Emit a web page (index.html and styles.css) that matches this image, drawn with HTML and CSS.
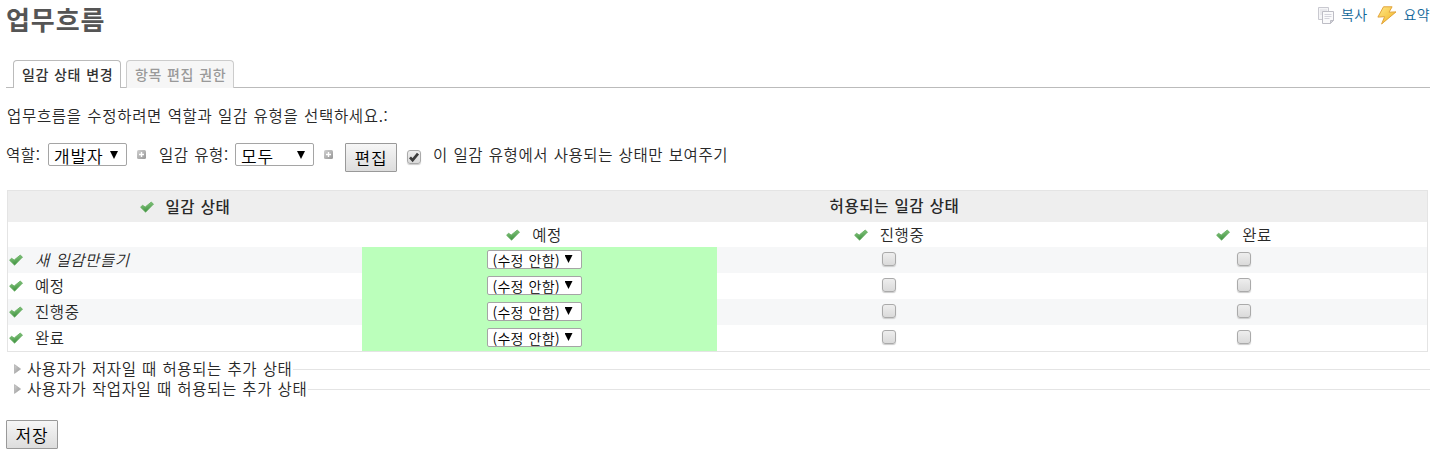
FILE: index.html
```html
<!DOCTYPE html>
<html lang="ko">
<head>
<meta charset="utf-8">
<title>업무흐름</title>
<link rel="stylesheet" href="styles.css">
</head>
<body>
<svg width="0" height="0" class="defs" aria-hidden="true">
  <defs>
    <linearGradient id="green" x1="0" y1="0" x2="0.3" y2="1"><stop offset="0" stop-color="#93d08a"/><stop offset="1" stop-color="#3f9240"/></linearGradient>
    <linearGradient id="gold" x1="0" y1="0" x2="1" y2="1"><stop offset="0" stop-color="#ffe88a"/><stop offset="1" stop-color="#f0b21c"/></linearGradient>
    <linearGradient id="silver" x1="0" y1="0" x2="1" y2="1"><stop offset="0" stop-color="#d0d0d0"/><stop offset="1" stop-color="#969696"/></linearGradient>
    <symbol id="check" viewBox="0 0 14 12"><path d="M.6 6.3 2.5 4.2 5.2 6 11.2 1.1 13.5 3.1 5.6 11.2Z" fill="url(#green)" stroke="#64ad5f" stroke-width=".8" stroke-linejoin="round"/></symbol>
    <symbol id="plus" viewBox="0 0 9 9"><rect width="9" height="9" rx="1.5" fill="url(#silver)"/><path d="M4.5 2v5M2 4.5h5" stroke="#fff" stroke-width="1.4"/></symbol>
    <symbol id="arrow" viewBox="0 0 7 10"><path d="M.5.6 6.6 5 .5 9.4Z" fill="url(#silver)" stroke="#aaa" stroke-width=".7"/></symbol>
  </defs>
</svg>
<header class="top">
  <h2>업무흐름</h2>
  <nav class="contextual">
    <a><svg class="copy" width="18" height="19" viewBox="0 0 18 19"><path d="M1.5 1.5h10v12h-10z" fill="#f5f5f7" stroke="#c9c9d0"/><path d="M3 4h7M3 6h7M3 8h7" stroke="#dcdce2"/><path d="M5.5 5.5h11v9l-3 3h-8z" fill="#fafafb" stroke="#bdbdc5"/><path d="M7.5 8.5h7M7.5 10.5h7M7.5 12.5h5" stroke="#d4d4dc"/><path d="M13.5 17.5v-3h3z" fill="#d4d4dc" stroke="#bdbdc5"/></svg><span>복사</span></a>
    <a><svg class="bolt" width="20" height="19" viewBox="0 0 20 19"><path d="M6.5.8h8.6L12 6.2l7-.3L4.6 18l3-7.3-6.7.4Z" fill="url(#gold)" stroke="#e2a43c" stroke-width="1" stroke-linejoin="round"/></svg><span>요약</span></a>
  </nav>
</header>
<div class="tabs"><a class="tab selected">일감 상태 변경</a><a class="tab">항목 편집 권한</a></div>
<p class="intro">업무흐름을 수정하려면 역할과 일감 유형을 선택하세요.:</p>
<form class="filters">
  <label class="role">역할:</label>
  <span class="select"><span>개발자</span><i></i></span>
  <svg class="plus" width="9" height="9"><use href="#plus"/></svg>
  <label class="tracker">일감 유형:</label>
  <span class="select"><span>모두</span><i></i></span>
  <svg class="plus" width="9" height="9"><use href="#plus"/></svg>
  <button type="button" class="button edit">편집</button>
  <span class="box checked"><svg width="14" height="14" viewBox="0 0 14 14"><path d="m3 7.4 2.6 2.8L11 3.6" fill="none" stroke="#3d3d3d" stroke-width="2.7"/></svg></span>
  <label>이 일감 유형에서 사용되는 상태만 보여주기</label>
</form>
<div class="table">
  <div class="row head"><div class="cell title"><svg class="ck"><use href="#check"/></svg><b>일감 상태</b></div><div class="allowed">허용되는 일감 상태</div></div>
  <div class="row names"><div class="cell"></div><div class="cell"><svg class="ck"><use href="#check"/></svg><span>예정</span></div><div class="cell"><svg class="ck"><use href="#check"/></svg><span>진행중</span></div><div class="cell"><svg class="ck"><use href="#check"/></svg><span>완료</span></div></div>
  <div class="row odd"><div class="cell name"><svg class="ck"><use href="#check"/></svg><em>새 일감만들기</em></div><div class="cell green"><span class="select small"><span>(수정 안함)</span><i></i></span></div><div class="cell"><span class="box"></span></div><div class="cell"><span class="box"></span></div></div>
  <div class="row"><div class="cell name"><svg class="ck"><use href="#check"/></svg><span>예정</span></div><div class="cell green"><span class="select small"><span>(수정 안함)</span><i></i></span></div><div class="cell"><span class="box"></span></div><div class="cell"><span class="box"></span></div></div>
  <div class="row odd"><div class="cell name"><svg class="ck"><use href="#check"/></svg><span>진행중</span></div><div class="cell green"><span class="select small"><span>(수정 안함)</span><i></i></span></div><div class="cell"><span class="box"></span></div><div class="cell"><span class="box"></span></div></div>
  <div class="row"><div class="cell name"><svg class="ck"><use href="#check"/></svg><span>완료</span></div><div class="cell green"><span class="select small"><span>(수정 안함)</span><i></i></span></div><div class="cell"><span class="box"></span></div><div class="cell"><span class="box"></span></div></div>
</div>
<div class="legends">
  <div class="legend"><svg width="7" height="10"><use href="#arrow"/></svg><span>사용자가 저자일 때 허용되는 추가 상태</span></div>
  <div class="legend"><svg width="7" height="10"><use href="#arrow"/></svg><span>사용자가 작업자일 때 허용되는 추가 상태</span></div>
</div>
<button type="button" class="button">저장</button>
</body>
</html>
```
FILE: styles.css
```css
* { box-sizing: border-box; }
body {
  margin: 0;
  padding: 0 15px 0 6px;
  height: 460px;
  overflow: hidden;
  background: #fff;
  color: #282828;
  font: 350 15.5px/20px "Noto Sans CJK KR", sans-serif;
  letter-spacing: .6px;
  word-spacing: .6px;
  white-space: nowrap;
}
svg { display: block; flex: none; }
.defs { position: absolute; }
.top { display: flex; justify-content: space-between; height: 60px; }
h2 { margin: 1px 0 0; font-size: 26px; line-height: 36px; letter-spacing: .9px; color: #555; }
.contextual { display: flex; gap: 10px; padding-top: 4px; font-size: 14px; letter-spacing: .4px; color: #116699; }
.contextual a { display: flex; height: 20px; }
.contextual .copy { margin: 2px 6px 0 0; }
.contextual .bolt { margin: 2px 6px 0 0; }
.tabs { display: flex; gap: 5px; height: 28px; padding-left: 7px; border-bottom: 1px solid #bbb; }
.tab {
  width: 108px;
  height: 28px;
  padding-left: 8px;
  border: 1px solid #ccc;
  border-bottom: 0;
  border-radius: 4px 4px 0 0;
  background: #f6f6f6;
  color: #999;
  font-size: 14px;
  font-weight: 500;
  line-height: 26px;
  letter-spacing: .6px;
}
.tab.selected { background: #fff; border-color: #bbb; color: #333; }
.intro { margin: 18px 0 0 1px; height: 37px; line-height: 19px; letter-spacing: .68px; }
.filters { display: flex; align-items: flex-start; height: 47px; }
.filters label { line-height: 23px; }
.filters .role { width: 42px; }
.filters .tracker { width: 76px; }
.select {
  display: flex;
  justify-content: space-between;
  flex: none;
  width: 79px;
  height: 23px;
  padding: 0 8px 0 5px;
  border: 1px solid #a5a5a5;
  border-radius: 2px;
  background: #fff;
  color: #000;
  font-size: 17px;
  line-height: 24px;
  letter-spacing: .8px;
}
.select i { width: 8px; height: 8px; margin-top: 7px; background: #000; clip-path: polygon(0 0, 100% 0, 50% 100%); }
.select.small { width: 95px; height: 19px; font-size: 14px; line-height: 19px; letter-spacing: .3px; }
.select.small i { margin-top: 4px; }
.plus { margin: 7px 13px 0 10px; }
.button {
  display: block;
  width: 52px;
  height: 29px;
  padding: 0 0 1px;
  border: 1px solid #999;
  border-radius: 1px;
  background: linear-gradient(#f6f6f6, #ddd);
  color: #000;
  font: 350 17px/25px "Noto Sans CJK KR", sans-serif;
  letter-spacing: .8px;
}
.filters .edit { margin-left: -1px; }
.box {
  flex: none;
  width: 14px;
  height: 14px;
  border: 1px solid #aaa;
  border-radius: 3px;
  background: linear-gradient(#eee, #dadada);
  box-shadow: 0 1px 1px #ccc;
}
.box.checked { margin: 7px 12px 0 10px; }
.box.checked svg { margin: -1px; }
.table { width: 1421px; height: 162px; margin-left: 1px; border: 1px solid #e4e4e4; }
.row { display: grid; grid-template-columns: 354px 355px 355px 355px; height: 26px; line-height: 18px; }
.row.head { height: 31px; background: #eee; font-weight: 500; }
.row.head b { font-weight: 500; }
.row.names { height: 25px; }
.row.odd { background: #f6f7f8; }
.allowed { grid-column: 2 / 5; text-align: center; line-height: 29px; }
.cell { display: flex; align-items: center; justify-content: center; padding-right: 11px; }
.cell.title { padding-right: 0; }
.cell > span, .cell > em, .cell > b { margin-bottom: 2px; }
.cell.name { justify-content: flex-start; padding-left: 1px; }
.cell.green { background: #bfb; }
.cell > .select { margin-bottom: 1px; }
.ck { width: 14px; height: 12px; margin-right: 12px; }
.legends { padding: 7px 0 0 8px; height: 68px; }
.legend { display: flex; align-items: center; height: 20px; line-height: 18px; }
.legend span { margin-bottom: 2px; }
.legend svg { margin-right: 6px; }
.legend::after { content: ""; flex: 1; height: 1px; margin-left: 1px; background: #e4e4e4; }
```
